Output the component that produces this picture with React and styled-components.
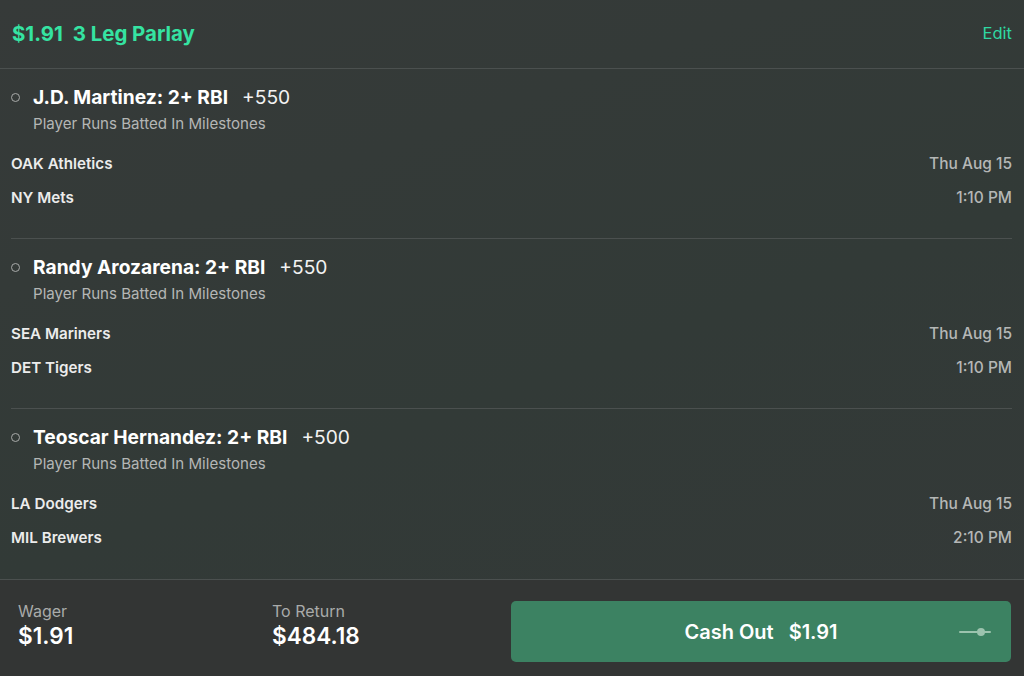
import React from 'react';
import styled, { createGlobalStyle } from 'styled-components';

const GlobalStyle = createGlobalStyle`
  html, body {
    margin: 0;
    padding: 0;
    background: #333837;
  }
  * {
    box-sizing: border-box;
  }
`;

const Page = styled.div`
  width: 1024px;
  height: 676px;
  display: flex;
  flex-direction: column;
  overflow: hidden;
  font-family: Inter, 'Noto Sans', sans-serif;
  background: linear-gradient(160deg, #363a39 0%, #323a37 55%, #343938 100%);
  color: #ffffff;
`;

const Header = styled.div`
  height: 69px;
  flex-shrink: 0;
  display: flex;
  justify-content: space-between;
  align-items: center;
  padding: 0 12px 2px 12px;
  border-bottom: 1px solid #4b504f;
`;

const Title = styled.h1`
  margin: 0;
  font-size: 20.4px;
  font-weight: 700;
  color: #35e3a2;
  span {
    margin-left: 10px;
  }
`;

const EditLink = styled.div`
  font-size: 16.5px;
  color: #2fd8a2;
`;

const LegList = styled.div`
  flex: 1;
  display: flex;
  flex-direction: column;
`;

const Leg = styled.div`
  height: ${({ last }) => (last ? '169px' : '170px')};
  margin: 0 12px 0 11px;
  padding-top: 17px;
  border-bottom: ${({ last }) => (last ? 'none' : '1px solid #4b504f')};
`;

const LegTitleRow = styled.div`
  display: flex;
  align-items: center;
  height: 22px;
`;

const Dot = styled.div`
  width: 9px;
  height: 9px;
  border-radius: 50%;
  border: 1.2px solid #a8aaa9;
  margin-right: 13px;
  flex-shrink: 0;
`;

const Selection = styled.div`
  font-size: 19.2px;
  font-weight: 700;
  color: #ffffff;
`;

const Odds = styled.div`
  font-size: 19.2px;
  font-weight: 400;
  color: #f2f2f2;
  margin-left: 14px;
`;

const Market = styled.div`
  margin: 7px 0 0 22px;
  font-size: 15.1px;
  line-height: 18px;
  color: #b4b6b5;
`;

const TeamRows = styled.div`
  margin-top: 20px;
  display: flex;
  flex-direction: column;
  gap: 14px;
`;

const TeamRow = styled.div`
  display: flex;
  justify-content: space-between;
  align-items: center;
  height: 20px;
`;

const Team = styled.div`
  font-size: 15.2px;
  font-weight: 600;
  color: #ececec;
`;

const When = styled.div`
  font-size: 15.5px;
  font-weight: 500;
  color: #b5b7b6;
`;

const Footer = styled.div`
  height: 97px;
  flex-shrink: 0;
  display: flex;
  align-items: flex-start;
  padding: 21px 13px 0 18px;
  border-top: 1px solid #4b504f;
  background: #333534;
`;

const Stat = styled.div`
  width: ${({ w }) => w}px;
  flex-shrink: 0;
  display: flex;
  flex-direction: column;
`;

const StatLabel = styled.div`
  font-size: 16px;
  line-height: 20px;
  color: #a9abaa;
`;

const StatValue = styled.div`
  margin-top: 2px;
  font-size: 22.6px;
  line-height: 26px;
  font-weight: 600;
  color: #ffffff;
`;

const CashOutButton = styled.button`
  margin-left: auto;
  width: 500px;
  height: 61px;
  flex-shrink: 0;
  border: none;
  border-radius: 5px;
  background: #3c8262;
  color: #ffffff;
  font-family: inherit;
  font-size: 20px;
  font-weight: 600;
  display: flex;
  align-items: center;
  justify-content: center;
  position: relative;
  cursor: pointer;
  span + span {
    margin-left: 15px;
  }
`;

const SliderIcon = styled.svg`
  position: absolute;
  right: 20px;
  top: 50%;
  transform: translateY(-50%);
`;

const legs = [
  {
    selection: 'J.D. Martinez: 2+ RBI',
    odds: '+550',
    home: 'OAK Athletics',
    away: 'NY Mets',
    date: 'Thu Aug 15',
    time: '1:10 PM',
  },
  {
    selection: 'Randy Arozarena: 2+ RBI',
    odds: '+550',
    home: 'SEA Mariners',
    away: 'DET Tigers',
    date: 'Thu Aug 15',
    time: '1:10 PM',
  },
  {
    selection: 'Teoscar Hernandez: 2+ RBI',
    odds: '+500',
    home: 'LA Dodgers',
    away: 'MIL Brewers',
    date: 'Thu Aug 15',
    time: '2:10 PM',
  },
];

const App = () => {
  return (
    <Page>
      <GlobalStyle />
      <Header>
        <Title>
          $1.91<span>3 Leg Parlay</span>
        </Title>
        <EditLink>Edit</EditLink>
      </Header>

      <LegList>
        {legs.map((leg, i) => (
          <Leg key={leg.selection} last={i === legs.length - 1}>
            <LegTitleRow>
              <Dot />
              <Selection>{leg.selection}</Selection>
              <Odds>{leg.odds}</Odds>
            </LegTitleRow>
            <Market>Player Runs Batted In Milestones</Market>
            <TeamRows>
              <TeamRow>
                <Team>{leg.home}</Team>
                <When>{leg.date}</When>
              </TeamRow>
              <TeamRow>
                <Team>{leg.away}</Team>
                <When>{leg.time}</When>
              </TeamRow>
            </TeamRows>
          </Leg>
        ))}
      </LegList>

      <Footer>
        <Stat w={254}>
          <StatLabel>Wager</StatLabel>
          <StatValue>$1.91</StatValue>
        </Stat>
        <Stat w={239}>
          <StatLabel>To Return</StatLabel>
          <StatValue>$484.18</StatValue>
        </Stat>
        <CashOutButton>
          <span>Cash Out</span>
          <span>$1.91</span>
          <SliderIcon width="32" height="10" viewBox="0 0 32 10">
            <line x1="1" y1="5" x2="31" y2="5" stroke="#9cc3ae" strokeWidth="2" strokeLinecap="round" />
            <circle cx="22" cy="5" r="4" fill="#9cc3ae" />
          </SliderIcon>
        </CashOutButton>
      </Footer>
    </Page>
  );
};

export default App;
